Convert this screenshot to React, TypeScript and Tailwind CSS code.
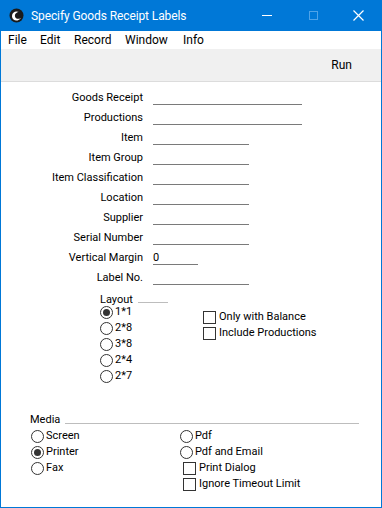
import React from "react";

const font = { fontFamily: 'Roboto, "Liberation Sans", Arial, sans-serif' };

function Radio({ checked }: { checked?: boolean }) {
  return (
    <span className="w-[13px] h-[13px] rounded-full border border-[#333] bg-white flex items-center justify-center shrink-0">
      {checked && <span className="w-[7px] h-[7px] rounded-full bg-[#333]" />}
    </span>
  );
}

function Check() {
  return <span className="w-[13px] h-[13px] border border-[#333] bg-white shrink-0" />;
}

const rows: [string, number, string?][] = [
  ["Goods Receipt", 149],
  ["Productions", 149],
  ["Item", 96],
  ["Item Group", 96],
  ["Item Classification", 96],
  ["Location", 96],
  ["Supplier", 96],
  ["Serial Number", 96],
  ["Vertical Margin", 45, "0"],
  ["Label No.", 96],
];

export default function App() {
  return (
    <div className="w-[382px] h-[508px] bg-[#0078d7] flex flex-col text-[11px] text-black" style={font}>
      {/* title bar */}
      <div className="h-[31px] flex items-center text-white shrink-0">
        <div className="w-[30px] flex justify-center pl-[2px]">
          <svg width="15" height="15" viewBox="0 0 15 15">
            <circle cx="7.5" cy="7.5" r="7" fill="#1a1a1a" />
            <path d="M3 8 C3 4 7 2.5 10 4 C8 4 5.5 5.5 6 8.5 C6.5 11 9.5 11.5 12 10 C10.5 12.5 6.5 13.5 4.5 11.5 C3.5 10.5 3 9.5 3 8 Z" fill="#fff" />
          </svg>
        </div>
        <span className="text-[12px] tracking-[-0.1px] ml-[1px]">Specify Goods Receipt Labels</span>
        <div className="flex-1" />
        <div className="w-[46px] flex justify-center">
          <span className="w-[10px] h-px bg-white" />
        </div>
        <div className="w-[46px] flex justify-center">
          <span className="w-[9px] h-[9px] border border-[#4fa3e8]" />
        </div>
        <div className="w-[46px] flex justify-center pr-[2px]">
          <svg width="11" height="11" viewBox="0 0 11 11">
            <path d="M0.5 0.5 L10.5 10.5 M10.5 0.5 L0.5 10.5" stroke="#fff" strokeWidth="1.2" />
          </svg>
        </div>
      </div>
      <div className="flex-1 mx-px mb-px bg-white flex flex-col">
        {/* menu */}
        <div className="h-[18px] flex items-center text-[12px] shrink-0 pl-[7px]">
          <span className="w-[32px]">File</span>
          <span className="w-[34px]">Edit</span>
          <span className="w-[51px]">Record</span>
          <span className="w-[58px]">Window</span>
          <span>Info</span>
        </div>
        {/* toolbar */}
        <div className="h-[33px] bg-[#f0f0f0] border-b border-[#dcdcdc] flex items-center justify-end pr-[29px] shrink-0">
          <span className="text-[12px]">Run</span>
        </div>
        {/* form */}
        <div className="flex flex-col pt-[6px]">
          {rows.map(([label, w, v]) => (
            <div key={label} className="h-[20px] flex items-center">
              <span className="w-[142px] text-right">{label}</span>
              <span
                className="ml-[10px] h-[13px] border-b border-[#7a7a7a] leading-[12px] mt-[1px]"
                style={{ width: w }}
              >
                {v ?? ""}
              </span>
            </div>
          ))}
        </div>
        <div className="flex mt-[6px] leading-[12px]">
          <div className="ml-[99px] w-[103px] flex flex-col">
            <div className="h-[12px] flex items-center">
              <span>Layout</span>
              <span className="ml-[5px] w-[30px] h-px bg-[#bdbdbd] mt-[5px]" />
            </div>
            <div className="flex flex-col -mt-[2px]">
              {["1*1", "2*8", "3*8", "2*4", "2*7"].map((t, i) => (
                <div key={t} className="h-[16px] flex items-center gap-[2px]">
                  <Radio checked={i === 0} />
                  <span>{t}</span>
                </div>
              ))}
            </div>
          </div>
          <div className="flex flex-col pt-[15px]">
            {["Only with Balance", "Include Productions"].map((t) => (
              <div key={t} className="h-[16px] flex items-center gap-[3px]">
                <Check />
                <span>{t}</span>
              </div>
            ))}
          </div>
        </div>
        {/* media */}
        <div className="mt-[28px] ml-[29px] mr-[22px]">
          <div className="h-[16px] flex items-center">
            <span>Media</span>
            <span className="ml-[5px] flex-1 h-px bg-[#bdbdbd] mt-[6px]" />
          </div>
          <div className="flex">
            <div className="w-[150px] flex flex-col">
              {[["Screen", false], ["Printer", true], ["Fax", false]].map(([t, c]) => (
                <div key={t as string} className="h-[16px] flex items-center gap-[2px] ml-px">
                  <Radio checked={c as boolean} />
                  <span>{t as string}</span>
                </div>
              ))}
            </div>
            <div className="flex flex-col">
              {["Pdf", "Pdf and Email"].map((t) => (
                <div key={t} className="h-[16px] flex items-center gap-[2px]">
                  <Radio />
                  <span>{t}</span>
                </div>
              ))}
              {["Print Dialog", "Ignore Timeout Limit"].map((t) => (
                <div key={t} className="h-[16px] flex items-center gap-[3px] ml-[3px]">
                  <Check />
                  <span>{t}</span>
                </div>
              ))}
            </div>
          </div>
        </div>
      </div>
    </div>
  );
}
